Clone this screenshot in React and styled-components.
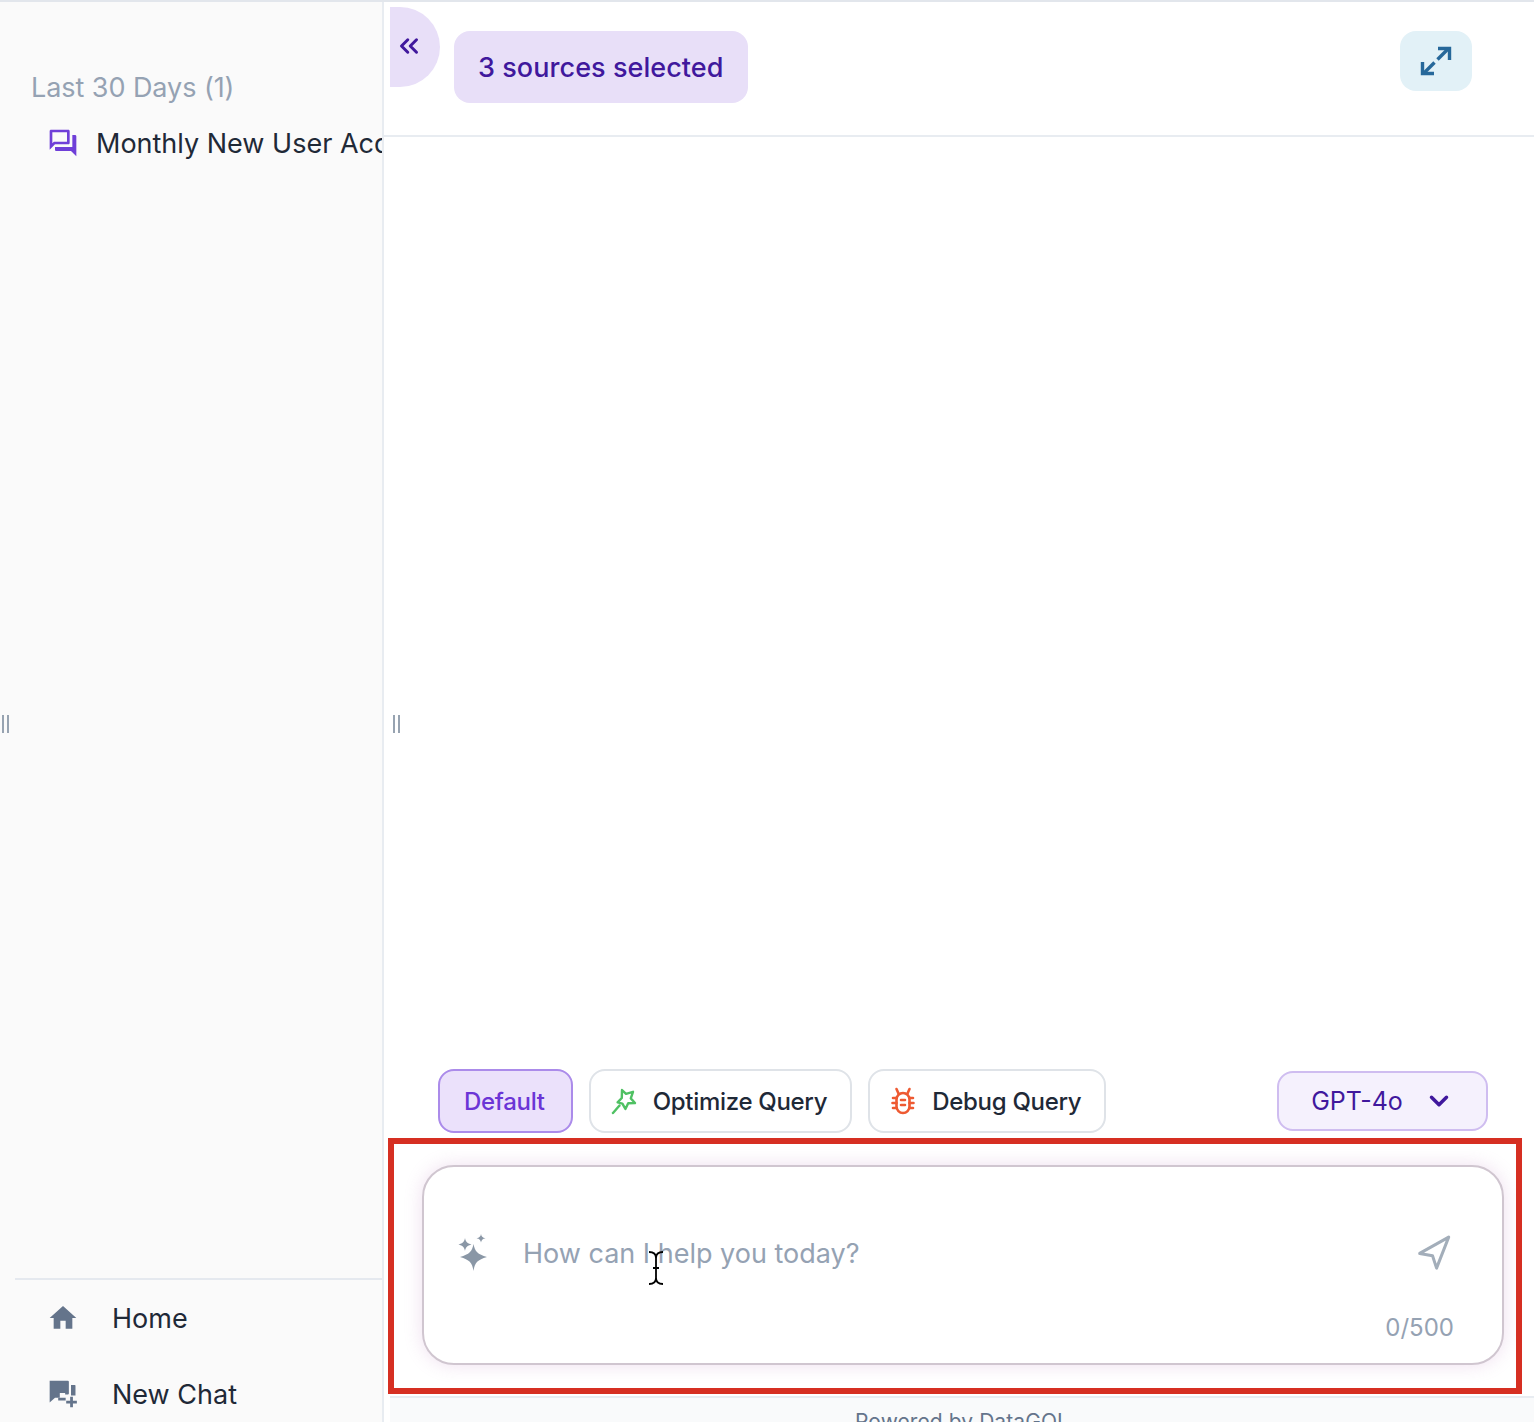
import styled, { createGlobalStyle } from 'styled-components';
import { ChevronDown, ChevronsLeft, Navigation } from 'lucide-react';
import { MdHome, MdOutlineForum } from 'react-icons/md';

const GlobalStyle = createGlobalStyle`
  html, body {
    margin: 0;
    padding: 0;
    background: #fff;
    font-family: Inter, "Liberation Sans", sans-serif;
  }
  * {
    box-sizing: border-box;
  }
`;

const Page = styled.div`
  position: relative;
  display: flex;
  width: 1534px;
  height: 1422px;
  border-top: 2px solid #e2e6ec;
  overflow: hidden;
  background: #fff;
`;

const Sidebar = styled.aside`
  position: relative;
  display: flex;
  flex-direction: column;
  flex: 0 0 384px;
  background: #fafafa;
  border-right: 2px solid #e8ecf1;
  overflow: hidden;
`;

const GroupTitle = styled.div`
  margin: 68px 0 0 31px;
  font-size: 27px;
  letter-spacing: -0.06px;
  line-height: 36px;
  color: #95a2b3;
`;

const HistoryItem = styled.div`
  display: flex;
  align-items: center;
  gap: 17px;
  margin: 19px 0 0 47px;
  height: 36px;
  font-size: 27px;
  color: #1f2937;
  white-space: nowrap;

  svg {
    flex: none;
    width: 32px;
    height: 32px;
    color: #6f3fd8;
  }
`;

const SideNav = styled.nav`
  margin: auto 0 0 15px;
  padding-top: 20px;
  border-top: 2px solid #e5e9ef;
  height: 144px;
`;

const NavItem = styled.div`
  display: flex;
  align-items: center;
  gap: 33px;
  height: 36px;
  margin: 0 0 40px 32px;
  font-size: 27px;
  color: #1f2937;

  svg {
    flex: none;
    width: 32px;
    height: 32px;
    color: #64748b;
  }
`;

const Grip = styled.div`
  position: absolute;
  top: 713px;
  left: ${(props) => props.$left}px;
  width: 7px;
  height: 18px;
  border-left: 2px solid #97a3b1;
  border-right: 2px solid #97a3b1;
`;

const Main = styled.main`
  display: flex;
  flex-direction: column;
  flex: 1;
  min-width: 0;
`;

const Header = styled.header`
  display: flex;
  align-items: flex-start;
  flex: 0 0 135px;
  padding: 5px 62px 0 6px;
  border-bottom: 2px solid #e8ecf1;
`;

const CollapseTab = styled.button`
  display: flex;
  align-items: center;
  width: 50px;
  height: 80px;
  padding: 0 0 0 4px;
  margin: 0;
  border: none;
  border-radius: 0 40px 40px 0;
  background: #e8dff8;
  color: #40189d;

  svg {
    width: 30px;
    height: 30px;
    margin-top: -2px;
    stroke-width: 2.4;
  }
`;

const SourcesBadge = styled.div`
  display: flex;
  align-items: center;
  height: 72px;
  margin: 24px 0 0 14px;
  padding: 0 24px;
  border-radius: 16px;
  background: #e8dff8;
  color: #40189d;
  font-size: 27px;
  font-weight: 500;
  letter-spacing: 0.06px;
`;

const ExpandButton = styled.button`
  display: flex;
  align-items: center;
  justify-content: center;
  width: 72px;
  height: 60px;
  margin: 24px 0 0 auto;
  padding: 0;
  border: none;
  border-radius: 16px;
  background: #e2f1f7;
  color: #26689a;

  svg {
    width: 32px;
    height: 32px;
  }
`;

const Conversation = styled.div`
  flex: 1;
`;

const Toolbar = styled.div`
  display: flex;
  align-items: center;
  gap: 16px;
  height: 64px;
  margin-bottom: 5px;
  padding: 0 46px 0 54px;
`;

const ModeButton = styled.button`
  display: flex;
  align-items: center;
  gap: 16px;
  height: 64px;
  padding: ${(props) => (props.$active ? '0 26px 0 24px' : '0 23px 0 20px')};
  border: 2px solid ${(props) => (props.$active ? '#ab8bea' : '#dfe3e8')};
  border-radius: 16px;
  background: ${(props) => (props.$active ? '#ebe1fb' : '#fff')};
  color: ${(props) => (props.$active ? '#6b35d6' : '#1f2937')};
  font-family: inherit;
  font-size: 24px;
  font-weight: 500;
  letter-spacing: -0.3px;

  svg {
    flex: none;
    width: 26px;
    height: 28px;
  }
`;

const ModelSelect = styled.button`
  display: flex;
  align-items: center;
  justify-content: center;
  gap: 21px;
  width: 211px;
  height: 60px;
  margin-left: auto;
  padding: 0;
  border: 2px solid #cfbdf0;
  border-radius: 16px;
  background: #f5f1fd;
  color: #40189d;
  font-family: inherit;
  font-size: 25px;

  svg {
    width: 30px;
    height: 30px;
    stroke-width: 2.8;
  }
`;

const Highlight = styled.section`
  height: 256px;
  margin: 0 12px 0 4px;
  padding: 21px 12px 18px 28px;
  border: 6px solid #d62f22;
`;

const PromptBox = styled.div`
  position: relative;
  display: flex;
  align-items: center;
  height: 200px;
  padding: 0 49px 24px 34px;
  border: 2px solid #d0c6d0;
  border-radius: 32px;
  background: #fff;
  box-shadow: 0 0 18px rgba(190, 120, 190, 0.24);
`;

const PromptIcon = styled.svg`
  flex: none;
  width: 30px;
  height: 38px;
  color: #8a97a6;
`;

const PromptText = styled.div`
  flex: 1;
  margin-left: 35px;
  font-size: 27px;
  color: #95a2b3;
`;

const SendIcon = styled(Navigation)`
  flex: none;
  width: 38px;
  height: 38px;
  margin-top: 2px;
  color: #a3aeba;
  stroke-width: 1.9;
  transform: rotate(-4deg);
`;

const Counter = styled.div`
  position: absolute;
  right: 48px;
  bottom: 21px;
  font-size: 24px;
  color: #95a2b3;
`;

const TextCursor = styled.svg`
  position: absolute;
  left: 223px;
  top: 84px;
  width: 18px;
  height: 34px;
  color: #000;
`;

const Footer = styled.footer`
  flex: 0 0 26px;
  margin: 2px 0 0 6px;
  padding-top: 10px;
  border-top: 2px solid #e8ecf1;
  background: #f9fafb;
  color: #64748b;
  font-size: 21px;
  letter-spacing: 0.08px;
  line-height: 28px;
  text-align: center;
  overflow: hidden;
`;

function NewChatIcon() {
  return (
    <svg viewBox="1 2 30 30" fill="currentColor">
      <path d="M3.500 4.500h17a1 1 0 0 1 1 1v11a1 1 0 0 1-1 1H18v-1.500h-5v4.500H8.500l-5 4.500z" />
      <path d="M23.500 8.500h3.600a.6.6 0 0 1 .6.6v9.400h-4.200z" />
      <path d="M11.500 20.500h7v2.600h-7zM22.700 19.500h2.600v3.800H29v2.600h-3.700v3.600h-2.600v-3.600H19v-2.600h3.700z" />
    </svg>
  );
}

function ExpandIcon() {
  return (
    <svg viewBox="0 0 32 32" fill="none" stroke="currentColor" strokeWidth="3.400">
      <path d="M17.500 14.500 28 4" />
      <path d="M18 3.500h11.500V15" />
      <path d="M14.500 17.500 4 28" />
      <path d="M2.500 17v11.500H14" />
    </svg>
  );
}

function WandIcon() {
  return (
    <svg viewBox="0 0 26 28" fill="none" stroke="#4fc163" strokeWidth="2.400" strokeLinejoin="round" strokeLinecap="round">
      <path d="m11 3 4 3.800 7-2-2.200 6.600 4.200 4.600-6.800.3-2.800 5.700-3-5.400-4.800-1.200 4.200-4.400z" />
      <path d="M8.500 18.500 2 26" />
    </svg>
  );
}

function BugIcon() {
  return (
    <svg viewBox="0 0 26 28" fill="none" stroke="#ee5a32" strokeWidth="2.600" strokeLinecap="round">
      <rect x="6.500" y="6" width="13" height="20" rx="6.500" />
      <path d="M8.500 6.500 6.500 2M17.500 6.500l2-4.500M6.500 11H3M6.500 16H2.500M6.500 21H3M19.500 11H23M19.500 16h4M19.500 21H23" />
      <path d="M11 13h4M11 18h4" />
    </svg>
  );
}

function App() {
  return (
    <>
      <GlobalStyle />
      <Page>
        <Sidebar>
          <GroupTitle>Last 30 Days (1)</GroupTitle>
          <HistoryItem>
            <MdOutlineForum />
            Monthly New User Acquisition
          </HistoryItem>
          <SideNav>
            <NavItem>
              <MdHome />
              Home
            </NavItem>
            <NavItem>
              <NewChatIcon />
              New Chat
            </NavItem>
          </SideNav>
          <Grip $left={2} />
        </Sidebar>
        <Main>
          <Header>
            <CollapseTab>
              <ChevronsLeft />
            </CollapseTab>
            <SourcesBadge>3 sources selected</SourcesBadge>
            <ExpandButton>
              <ExpandIcon />
            </ExpandButton>
          </Header>
          <Conversation />
          <Toolbar>
            <ModeButton $active>Default</ModeButton>
            <ModeButton>
              <WandIcon />
              Optimize Query
            </ModeButton>
            <ModeButton>
              <BugIcon />
              Debug Query
            </ModeButton>
            <ModelSelect>
              GPT-4o
              <ChevronDown />
            </ModelSelect>
          </Toolbar>
          <Highlight>
            <PromptBox>
              <PromptIcon viewBox="0 0 30 38" fill="currentColor">
                <path d="M15.500 10c1.400 7.500 4 10.200 13.500 13-9.500 2.800-12.100 5.500-13.500 14-1.400-8.500-4-11.200-13.500-14 9.500-2.800 12.100-5.500 13.500-13z" />
                <path d="M7 4c.8 4 2.200 5.400 6.500 6.500-4.300 1.100-5.700 2.500-6.500 6.500-.8-4-2.200-5.400-6.500-6.500C4.800 9.400 6.200 8 7 4z" />
                <path d="M23 0c.5 2.600 1.400 3.600 4.500 4.300-3.100.7-4 1.700-4.500 4.300-.5-2.600-1.400-3.600-4.500-4.300C21.600 3.600 22.500 2.600 23 0z" />
              </PromptIcon>
              <PromptText>How can I help you today?</PromptText>
              <SendIcon />
              <Counter>0/500</Counter>
              <TextCursor viewBox="0 0 18 34" fill="none" stroke="currentColor" strokeWidth="1.800">
                <path d="M2 1c4 0 7 2 7 6v20c0 4-3 6-7 6M16 1c-4 0-7 2-7 6v20c0 4 3 6 7 6M6 17h6" />
              </TextCursor>
            </PromptBox>
          </Highlight>
          <Footer>Powered by DataGOL</Footer>
        </Main>
        <Grip $left={393} />
      </Page>
    </>
  );
}

export default App;
